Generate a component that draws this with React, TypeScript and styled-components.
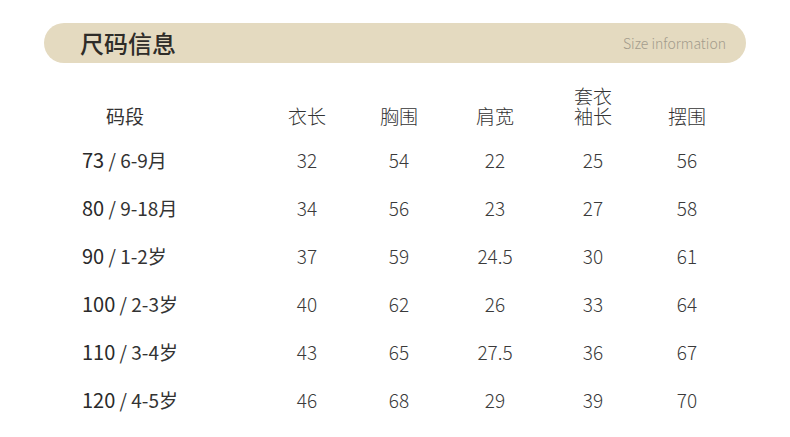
import React, { FC } from 'react'
import styled, { createGlobalStyle } from 'styled-components'

const GlobalStyle = createGlobalStyle`
    body {
        margin: 0;
        background: #ffffff;
        font-family: "Noto Sans CJK SC", "Noto Sans", sans-serif;
    }
`

const Page = styled.div`
    width: 790px;
    height: 437px;
    padding-top: 23px;
    box-sizing: border-box;
    overflow: hidden;
`

const TitleBar = styled.div`
    margin-left: 44px;
    width: 702px;
    height: 40px;
    border-radius: 20px;
    background: #e4dac0;
    display: flex;
    align-items: center;
    justify-content: space-between;
    padding: 0 20px 0 36px;
    box-sizing: border-box;

    h1 {
        margin: 0;
        font-size: 24px;
        font-weight: 500;
        color: #2e2c28;
        line-height: 1;
    }

    span {
        font-size: 14px;
        color: #a39c8c;
        font-weight: 300;
    }
`

const Table = styled.div`
    margin: 24px 0 0 82px;
    display: grid;
    grid-template-columns: 178px 94px 90px 102px 94px 94px;
    grid-auto-rows: 48px;
`

const HeadCell = styled.div<{ $left?: boolean }>`
    display: flex;
    flex-direction: column;
    justify-content: flex-end;
    align-items: ${p => (p.$left ? 'flex-start' : 'center')};
    padding-left: ${p => (p.$left ? '24px' : '0')};
    padding-bottom: 9px;
    font-size: 19px;
    line-height: 20px;
    font-weight: ${p => (p.$left ? 400 : 300)};
    color: #333333;
    height: 49px;
    align-self: end;
`

const Cell = styled.div<{ $left?: boolean }>`
    display: flex;
    align-items: center;
    justify-content: ${p => (p.$left ? 'flex-start' : 'center')};
    font-size: 19px;
    font-weight: ${p => (p.$left ? 400 : 300)};
    color: ${p => (p.$left ? '#333333' : '#3a3a3a')};
    white-space: pre;

    b {
        font-weight: 400;
        font-size: 20px;
        color: #2a2a2a;
    }
`

const headers = ['衣长', '胸围', '肩宽', '套衣\n袖长', '摆围']

const rows = [
    { size: '73', age: '6-9月', values: ['32', '54', '22', '25', '56'] },
    { size: '80', age: '9-18月', values: ['34', '56', '23', '27', '58'] },
    { size: '90', age: '1-2岁', values: ['37', '59', '24.5', '30', '61'] },
    { size: '100', age: '2-3岁', values: ['40', '62', '26', '33', '64'] },
    { size: '110', age: '3-4岁', values: ['43', '65', '27.5', '36', '67'] },
    { size: '120', age: '4-5岁', values: ['46', '68', '29', '39', '70'] },
]

const App: FC = () => {
    return (
        <>
            <GlobalStyle />
            <Page>
                <TitleBar>
                    <h1>尺码信息</h1>
                    <span>Size information</span>
                </TitleBar>
                <Table>
                    <HeadCell $left>码段</HeadCell>
                    {headers.map(h => (
                        <HeadCell key={h}>
                            {h.split('\n').map(line => <div key={line}>{line}</div>)}
                        </HeadCell>
                    ))}
                    {rows.map(r => (
                        <React.Fragment key={r.size}>
                            <Cell $left><b>{r.size}</b> / {r.age}</Cell>
                            {r.values.map((v, i) => <Cell key={i}>{v}</Cell>)}
                        </React.Fragment>
                    ))}
                </Table>
            </Page>
        </>
    )
}

export default App
